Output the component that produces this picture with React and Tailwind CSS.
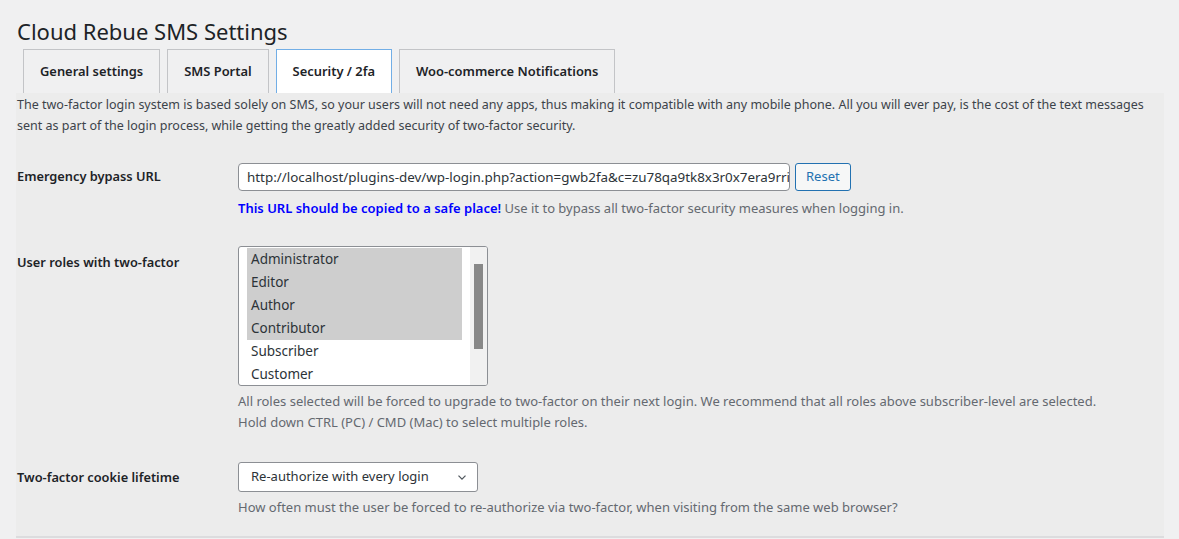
import { useState } from "react";

const ROLES = ["Administrator", "Editor", "Author", "Contributor", "Subscriber", "Customer"];
const TABS = ["General settings", "SMS Portal", "Security / 2fa", "Woo-commerce Notifications"];

const Row = ({ label, labelPad, children, className = "" }) => (
  <div className={`flex items-start pl-px ${className}`}>
    <div className={`w-[221px] shrink-0 text-[12.8px] leading-[20px] font-semibold text-[#1d2327] ${labelPad}`}>{label}</div>
    <div className="flex-1">{children}</div>
  </div>
);

const App = () => {
  const [tab, setTab] = useState(2);
  const [roles, setRoles] = useState(["Administrator", "Editor", "Author", "Contributor"]);

  const toggle = (r) => setRoles(roles.includes(r) ? roles.filter(x => x !== r) : [...roles, r]);

  return (
    <div className="min-h-[539px] bg-[#f0f0f1] text-[#3c434a] text-[13px] font-['Noto_Sans',sans-serif] overflow-hidden">
      <h1 className="pl-[17px] pt-[15px] text-[22px] leading-[32px] text-[#1d2327]">Cloud Rebue SMS Settings</h1>

      <div className="flex gap-[7px] pl-[23px] mt-[2px]">
        {TABS.map((t, i) => (
          <button key={t} onClick={() => setTab(i)}
            className={`h-[44px] px-[16px] text-[12.9px] font-semibold border border-b-0 text-[#1d2327] ${i === tab ? "bg-white border-[#72aee6]" : "bg-[#f0f0f1] border-[#c3c4c7]"}`}>
            {t}
          </button>
        ))}
      </div>

      <div className="ml-[16px] w-[1148px] bg-[#ececec] border-b-2 border-[#dcdcde] h-[445px]">
        <p className="pl-px pt-[1px] text-[12.5px] leading-[21px] whitespace-nowrap">
          The two-factor login system is based solely on SMS, so your users will not need any apps, thus making it compatible with any mobile phone. All you will ever pay, is the cost of the text messages<br />
          sent as part of the login process, while getting the greatly added security of two-factor security.
        </p>

        <Row label="Emergency bypass URL" labelPad="pt-[3px]" className="mt-[27px]">
          <div className="flex items-center gap-[5px]">
            <div className="w-[552px] h-[28px] border border-[#8c8f94] rounded-[4px] bg-white px-[8px] flex items-center text-[13.4px] text-[#2c3338] overflow-hidden whitespace-nowrap">
              http://localhost/plugins-dev/wp-login.php?action=gwb2fa&amp;c=zu78qa9tk8x3r0x7era9rri
            </div>
            <button className="h-[28px] px-[10px] border border-[#2271b1] rounded-[3px] bg-[#f6f7f7] text-[#2271b1]">Reset</button>
          </div>
          <div className="mt-[7px] leading-[20px] text-[#646970]">
            <span className="text-[#0000ff] font-semibold">This URL should be copied to a safe place!</span> Use it to bypass all two-factor security measures when logging in.
          </div>
        </Row>

        <Row label="User roles with two-factor" labelPad="pt-[6px]" className="mt-[28px]">
          <div className="w-[250px] h-[140px] border border-[#8c8f94] rounded-[3px] bg-white flex overflow-hidden">
            <div className="flex-1 pl-[8px] pr-[8px] pt-px">
              {ROLES.map(r => (
                <div key={r} onClick={() => toggle(r)}
                  className={`h-[23px] leading-[23px] px-[4px] text-[13.5px] text-[#2c3338] cursor-default ${roles.includes(r) ? "bg-[#cecece]" : ""}`}>
                  {r}
                </div>
              ))}
            </div>
            <div className="w-[17px] bg-[#f1f1f1] flex justify-center pt-[17px]">
              <div className="w-[9px] h-[85px] bg-[#888888]" />
            </div>
          </div>
          <div className="mt-[5px] leading-[21px] text-[#646970]">
            All roles selected will be forced to upgrade to two-factor on their next login. We recommend that all roles above subscriber-level are selected.<br />
            Hold down CTRL (PC) / CMD (Mac) to select multiple roles.
          </div>
        </Row>

        <Row label="Two-factor cookie lifetime" labelPad="pt-[5px]" className="mt-[29px]">
          <div className="w-[240px] h-[30px] border border-[#8c8f94] rounded-[3px] bg-white flex items-center justify-between pl-[12px] pr-[8px] text-[#2c3338]">
            <span>Re-authorize with every login</span>
            <svg width="14" height="14" viewBox="0 0 20 20" fill="none" stroke="#50575e" strokeWidth="1.8">
              <path d="M5 8l5 5 5-5" />
            </svg>
          </div>
          <div className="mt-[5px] leading-[20px] text-[#646970]">
            How often must the user be forced to re-authorize via two-factor, when visiting from the same web browser?
          </div>
        </Row>
      </div>
    </div>
  );
};

export default App;
